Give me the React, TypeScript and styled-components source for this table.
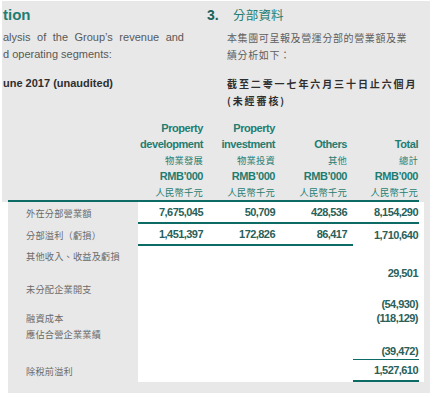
import React from "react";
import styled, { createGlobalStyle } from "styled-components";

const GRAY = "#e8e8e8";
const TEAL = "#0d6b66";
const HEAD = "#1f7d72";
const NUM = "#2a5f5a";
const LABEL = "#6a6a6a";
const CJK = `"Noto Sans CJK TC", "Noto Sans CJK SC", sans-serif`;
const NARROW = `"Liberation Sans Narrow", "Liberation Sans", Arial, sans-serif`;

const Global = createGlobalStyle`
  html, body { margin: 0; padding: 0; background: #ffffff; }
  body { font-family: "Liberation Sans", Arial, sans-serif; }
`;

const Page = styled.div`
  width: 438px;
  height: 397px;
  background: #fff;
  overflow: hidden;
`;

const Top = styled.section`
  margin: 1px 0 0 2px;
  width: 428px;
  background: ${GRAY};
  padding: 4px 0 0 1px;
  box-sizing: border-box;
`;

const Intro = styled.div`
  display: grid;
  grid-template-columns: 204px 1fr;
  grid-template-rows: 20px auto auto;
`;

const Heading = styled.div`
  font: bold 15px/20px "Liberation Sans", Arial, sans-serif;
  color: ${HEAD};
`;

const CnHeading = styled.div`
  display: flex;
  align-items: center;
  height: 20px;
`;

const Num = styled.span`
  width: 26px;
  font: bold 14px/20px "Liberation Sans", Arial, sans-serif;
  color: #17635d;
`;

const CnTitle = styled.span`
  font: 400 12.5px/20px ${CJK};
  color: ${HEAD};
  letter-spacing: 0.2px;
`;

const Block = styled.div<{ $mt: number; $indent?: number }>`
  margin-top: ${(p) => p.$mt}px;
  padding-left: ${(p) => p.$indent ?? 0}px;
`;

const EnLine = styled.div<{ $justify?: boolean; $bold?: boolean }>`
  font-size: 11px;
  line-height: 17px;
  height: 17px;
  white-space: nowrap;
  color: ${(p) => (p.$bold ? "#2e2e2e" : "#585858")};
  font-weight: ${(p) => (p.$bold ? 700 : 400)};
  width: ${(p) => (p.$justify ? "181px" : "auto")};
  text-align: ${(p) => (p.$justify ? "justify" : "left")};
  text-align-last: ${(p) => (p.$justify ? "justify" : "auto")};
`;

const CnLine = styled.div<{ $bold?: boolean }>`
  font-family: ${CJK};
  font-size: 10px;
  line-height: 17px;
  height: 17px;
  white-space: nowrap;
  color: ${(p) => (p.$bold ? "#2e2e2e" : "#5e5e5e")};
  font-weight: ${(p) => (p.$bold ? 700 : 400)};
  letter-spacing: ${(p) => (p.$bold ? "1.9px" : "0.6px")};
`;

const HeadGrid = styled.div`
  margin: 11px 0 0 5px;
  width: 411px;
  display: grid;
  grid-template-columns: 130px 71px 72px 72px 66px;
  border-bottom: 2px solid ${TEAL};
`;

const HeadCell = styled.div<{ $last?: boolean }>`
  text-align: right;
  padding-right: ${(p) => (p.$last ? 1 : 6)}px;
`;

const HeadLine = styled.div<{ $cn?: boolean }>`
  height: 16px;
  line-height: 16px;
  white-space: nowrap;
  color: ${HEAD};
  font-family: ${(p) => (p.$cn ? CJK : NARROW)};
  font-size: ${(p) => (p.$cn ? "9.3px" : "11px")};
  font-weight: ${(p) => (p.$cn ? 400 : 700)};
  letter-spacing: ${(p) => (p.$cn ? "0.2px" : "-0.45px")};
`;

const Body = styled.section`
  margin-left: 8px;
  width: 422px;
  background: ${GRAY};
  padding-bottom: 11px;
`;

const Row = styled.div<{ $h: number }>`
  display: grid;
  grid-template-columns: 130px 71px 72px 72px 66px 5px;
  width: 416px;
  height: ${(p) => p.$h}px;
  background: #fff;
`;

const Label = styled.div`
  background: ${GRAY};
  display: flex;
  align-items: center;
  padding-left: 18px;
  font-family: ${CJK};
  font-size: 9.2px;
  letter-spacing: 0.2px;
  color: ${LABEL};
  white-space: nowrap;
`;

const Cell = styled.div<{ $rule?: "thick" | "thin"; $last?: boolean }>`
  box-sizing: border-box;
  display: flex;
  align-items: center;
  justify-content: flex-end;
  padding-right: ${(p) => (p.$last ? 1 : 6)}px;
  border-bottom: ${(p) =>
    p.$rule === "thick" ? `2px solid ${TEAL}` : p.$rule === "thin" ? `1px solid ${TEAL}` : "none"};
  font-family: ${NARROW};
  font-weight: 700;
  font-size: 11px;
  letter-spacing: -0.55px;
  color: ${NUM};
  white-space: nowrap;
`;

type Rule = "thick" | "thin" | undefined;
type RowData = {
  h: number;
  label?: string;
  values?: (string | undefined)[];
  rules?: Rule[];
};

const rows: RowData[] = [
  {
    h: 22,
    label: "外在分部營業額",
    values: ["7,675,045", "50,709", "428,536", "8,154,290"],
    rules: ["thick", "thick", "thick", "thick"],
  },
  {
    h: 22,
    label: "分部溢利（虧損）",
    values: ["1,451,397", "172,826", "86,417", "1,710,640"],
    rules: ["thick", "thick", "thick", undefined],
  },
  { h: 20, label: "其他收入、收益及虧損" },
  { h: 14, values: [undefined, undefined, undefined, "29,501"] },
  { h: 17, label: "未分配企業開支" },
  { h: 13, values: [undefined, undefined, undefined, "(54,930)"] },
  { h: 16, label: "融資成本", values: [undefined, undefined, undefined, "(118,129)"] },
  { h: 16, label: "應佔合營企業業績" },
  {
    h: 18,
    values: [undefined, undefined, undefined, "(39,472)"],
    rules: [undefined, undefined, undefined, "thin"],
  },
  {
    h: 22,
    label: "除稅前溢利",
    values: [undefined, undefined, undefined, "1,527,610"],
    rules: [undefined, undefined, undefined, "thick"],
  },
];

const heads: string[][] = [
  ["Property", "development", "物業發展", "RMB’000", "人民幣千元"],
  ["Property", "investment", "物業投資", "RMB’000", "人民幣千元"],
  ["", "Others", "其他", "RMB’000", "人民幣千元"],
  ["", "Total", "總計", "RMB’000", "人民幣千元"],
];

export default function App() {
  return (
    <Page>
      <Global />
      <Top>
        <Intro>
          <Heading>tion</Heading>
          <CnHeading>
            <Num>3.</Num>
            <CnTitle>分部資料</CnTitle>
          </CnHeading>
          <Block $mt={4}>
            <EnLine $justify>alysis of the Group’s revenue and</EnLine>
            <EnLine>d operating segments:</EnLine>
          </Block>
          <Block $mt={4} $indent={20}>
            <CnLine>本集團可呈報及營運分部的營業額及業</CnLine>
            <CnLine>績分析如下：</CnLine>
          </Block>
          <Block $mt={12}>
            <EnLine $bold>une 2017 (unaudited)</EnLine>
          </Block>
          <Block $mt={12} $indent={20}>
            <CnLine $bold>截至二零一七年六月三十日止六個月</CnLine>
            <CnLine $bold>(未經審核)</CnLine>
          </Block>
        </Intro>
        <HeadGrid>
          <div />
          {heads.map((col, i) => (
            <HeadCell key={i} $last={i === 3}>
              {col.map((t, j) => (
                <HeadLine key={j} $cn={j === 2 || j === 4}>
                  {t}
                </HeadLine>
              ))}
            </HeadCell>
          ))}
        </HeadGrid>
      </Top>
      <Body>
        {rows.map((r, i) => (
          <Row key={i} $h={r.h}>
            <Label>{r.label ?? ""}</Label>
            {[0, 1, 2, 3].map((c) => (
              <Cell key={c} $rule={r.rules?.[c]} $last={c === 3}>
                {r.values?.[c] ?? ""}
              </Cell>
            ))}
            <div />
          </Row>
        ))}
      </Body>
    </Page>
  );
}
